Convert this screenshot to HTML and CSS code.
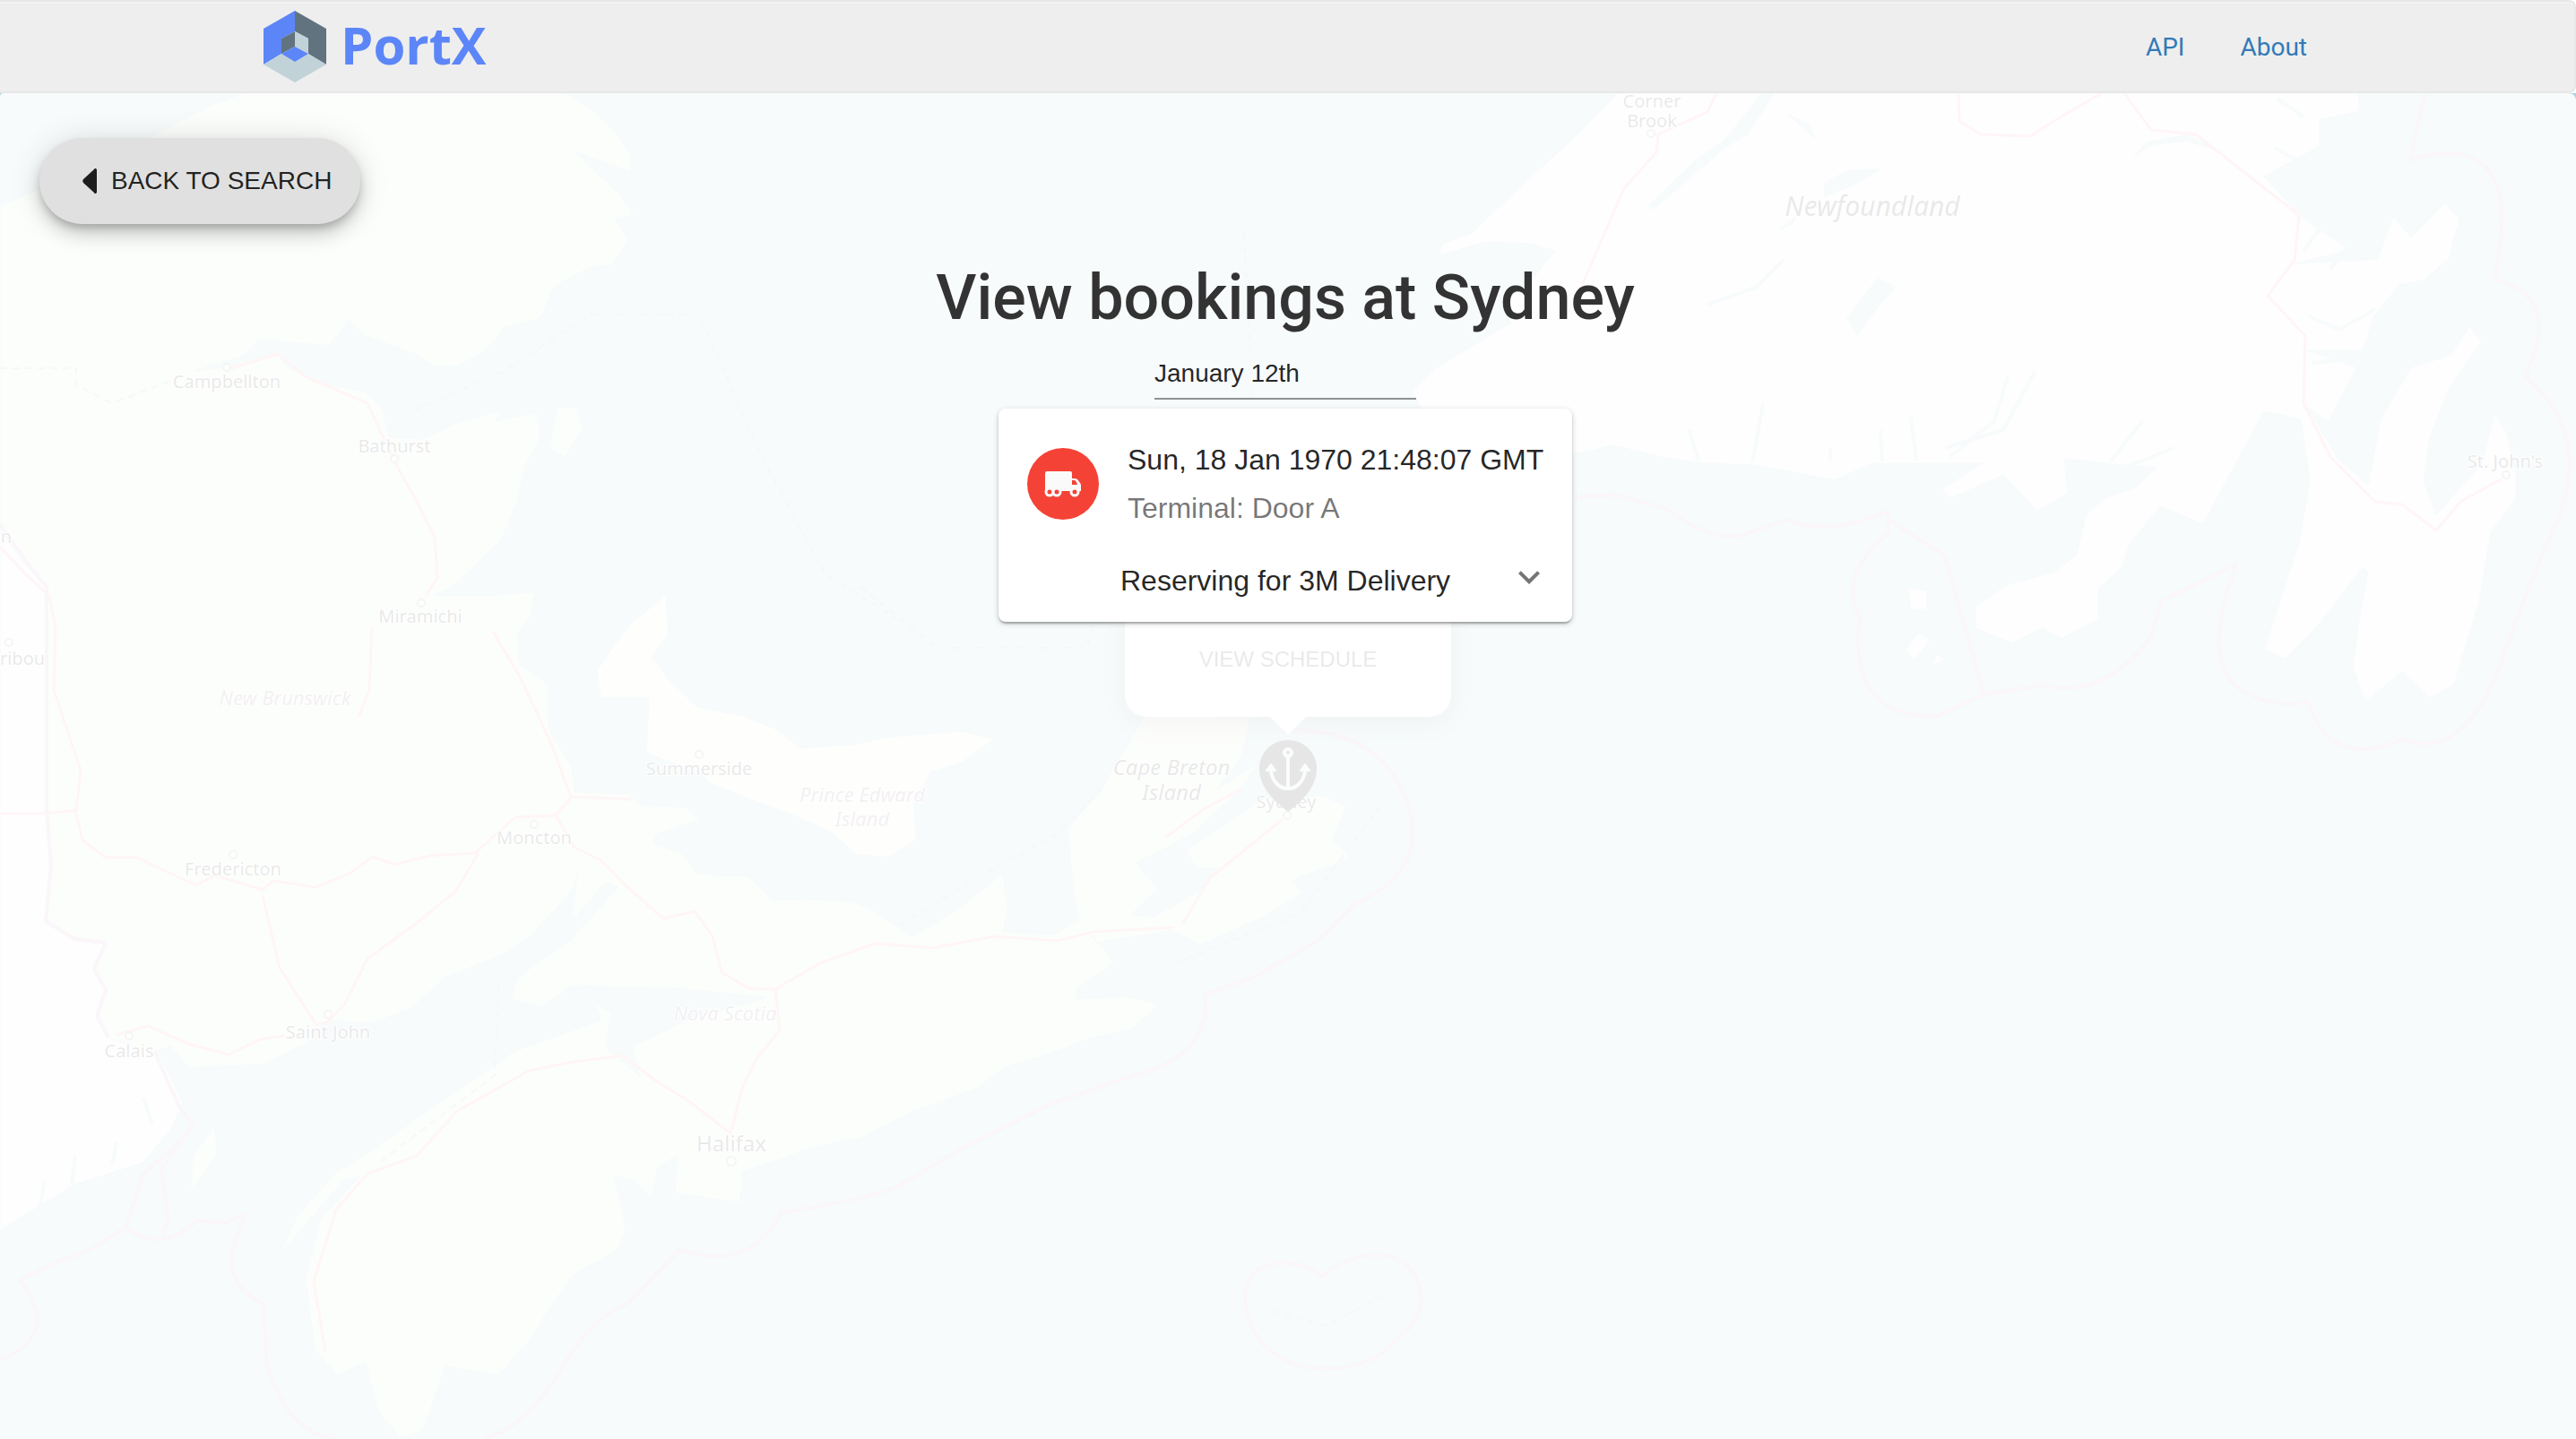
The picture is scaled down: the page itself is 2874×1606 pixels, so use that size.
FILE: index.html
```
<!DOCTYPE html>
<html lang="en">
<head>
    <meta charset="UTF-8">
    <meta name="viewport" content="width=device-width, initial-scale=1.0">
    <title>PortX</title>
    <link rel="stylesheet" href="styles.css">
</head>
<body>
    <header class="navbar">
        <a class="brand" href="#">
            <svg class="brand-logo" viewBox="0 0 70 80" aria-hidden="true">
                <path fill="#5c86f8" d="M35 0 0 20v40l20-12V31l15-8z"/>
                <path fill="#627380" d="M35 0l35 20v40L50 48V31l-15-8z"/>
                <path fill="#c1d3d9" d="M0 60l20-12 15 9 15-9 20 12-35 20z"/>
                <path fill="#627380" d="M20 31l15-8v17L20 48z"/>
                <path fill="#c1d3d9" d="M50 31l-15-8v17l15 8z"/>
                <path fill="#5c86f8" d="M20 48l15-8 15 8-15 9z"/>
            </svg>
            <span>PortX</span>
        </a>
        <nav class="nav-links">
            <a href="#">API</a>
            <a href="#">About</a>
        </nav>
    </header>

    <main class="content">
        <div class="map">
            <svg class="map-tiles" viewBox="0 104 2874 1502" preserveAspectRatio="xMidYMid slice" aria-hidden="true">
                <!-- land -->
                <path class="land forest" d="M272 104 237 117 207 132 165 155 90 190 27 218 0 230V1373L83 1322 159 1298 191 1260 204 1231 172 1173 191 1168 210 1192 293 1188 344 1163 364 1139 415 1142 459 1125 497 1091 561 1065 593 1043 638 995 644 975 638 1028 676 985 689 990 638 1048 577 1091 571 1115 603 1125 638 1101 753 1103 855 1113 765 1139 705 1168 714 1202 676 1168 682 1130 663 1120 670 1139 574 1173 497 1226 421 1279 376 1308 332 1356 312 1400 383 1318 402 1313 357 1361 341 1429 351 1506 376 1535 408 1520 421 1573 446 1605 472 1597 497 1525 555 1535 587 1501 612 1462 638 1424 689 1395 698 1371 686 1313 708 1318 727 1337 733 1303 756 1289 753 1332 826 1342 829 1308 912 1279 961 1270 1017 1241 1089 1215 1119 1192 1165 1178 1211 1161 1262 1149 1292 1121 1257 1112 1201 1115 1201 1103 1244 1075 1219 1046 1206 1026 1175 1043 1119 1040 1124 1017 1119 974 1073 1012 1017 1046 976 1017 951 1006 900 1003 861 1004 835 978 778 975 759 951 730 942 730 932 781 915 765 901 714 898 701 886 641 884 638 855 612 814 612 763 580 743 577 707 593 687 596 661 548 664 485 664 504 656 536 625 561 600 577 559 587 518 603 488 600 460 552 470 561 457 510 472 472 490 434 488 427 457 408 437 364 429 319 409 309 393 255 409 217 414 274 396 287 381 312 381 367 386 389 358 408 375 466 396 485 409 510 409 542 391 564 365 603 355 619 319 657 299 682 296 702 268 686 245 709 240 689 215 670 197 641 169 676 182 704 192 703 171 689 151 663 125 631 104z"/>
                <path class="land" d="M0 590 20 620 50 655 52 903 57 966 51 1028 83 1048 118 1052 105 1081 118 1105 108 1134 121 1158 178 1178 204 1231 191 1260 159 1298 83 1322 0 1373z"/>
                <path class="land coast" d="M743 664 746 707 727 733 746 758 778 789 829 799 867 814 893 835 957 830 992 822 1073 816 1109 825 1073 851 1038 862 1020 897 1022 937 992 957 956 954 925 927 880 908 829 889 791 874 784 865 721 840 724 779 670 779 666 748 702 697z"/>
                <path class="land forest" d="M1277 799 1395 800 1385 845 1359 880 1405 851 1380 885 1330 930 1308 943 1267 963 1293 992 1262 1020 1288 1023 1339 994 1360 970 1334 969 1323 948 1375 915 1410 891 1476 888 1502 900 1487 937 1507 957 1441 983 1453 997 1410 1023 1339 1055 1308 1038 1226 1052 1203 1029 1196 977 1191 925 1226 885z"/>
                <path class="land forest" d="M644 455 650 480 630 510 612 500 622 455zM240 1255 242 1290 212 1330 216 1290z"/>
                <path class="land" d="M1805 104 1760 150 1700 205 1642 260 1609 272 1606 285 1658 270 1708 272 1735 280 1708 313 1675 340 1686 360 1603 410 1576 437 1592 470 1757 507 1800 497 1862 512 1896 517 1958 519 2047 536 2088 517 2211 517 2166 546 2177 556 2235 530 2273 570 2307 551 2303 512 2368 519 2406 522 2382 544 2348 556 2327 575 2317 619 2293 638 2238 653 2204 677 2204 701 2245 718 2279 701 2300 713 2341 691 2341 657 2368 633 2375 609 2410 565 2458 585 2492 522 2526 459 2567 468 2577 536 2564 609 2553 643 2526 725 2550 735 2588 696 2636 633 2642 638 2632 691 2625 745 2639 783 2680 750 2711 779 2738 764 2766 672 2779 594 2807 556 2807 527 2797 483 2783 461 2769 517 2718 575 2704 536 2711 488 2732 434 2769 381 2755 364 2735 396 2690 410 2656 468 2642 541 2608 512 2574 454 2598 471 2629 410 2574 391 2636 391 2649 352 2677 318 2704 313 2732 289 2744 245 2728 226 2690 265 2670 241 2653 289 2560 294 2622 279 2567 241 2526 197 2588 163 2588 134 2632 124 2632 104z"/>
                <path class="land" d="M2128 655 2150 660 2150 680 2132 680zM2140 706 2154 714 2136 736 2125 726zM2160 730 2170 735 2156 743z"/>
                <!-- lakes and inlets -->
                <path class="water" d="M2060 355 2095 310 2115 320 2090 350 2072 375zM2035 205 2060 190 2100 188 2070 206 2035 220zM1980 104 1950 150 1925 165 1845 234 1838 230 1890 180 1925 155 1965 104zM1992 126 2018 138 2026 156zM2378 178 2395 158 2440 150 2485 172 2440 158 2400 162zM2000 250 1980 260 2005 240z"/>
                <path class="inlet" d="M1967 450 1955 517M2132 465 2138 515M2240 420 2225 470 2175 510M2270 415 2235 480 2170 500M2390 470 2355 515M2425 500 2370 522M2042 515V500M1885 480 1895 515M2100 515 2098 480M2540 110 2570 130M1905 340 1960 320 1990 290M2626 400 2580 405M2574 352 2610 368 2650 345M2538 165 2600 200 2560 225M2575 175 2625 160M2600 240 2570 280M2640 250 2600 300M80 1322 84 1290M45 1345 50 1318M125 1300 130 1275M170 1255 160 1225"/>
                <!-- roads -->
                <path class="road" d="M0 908H52L84 904 92 938 118 957 153 957 218 988 240 977 293 993 305 983 352 990 390 975 416 956 440 965 480 955 530 952 575 912 620 910 638 889 705 892M0 610 28 640 55 665 62 700 60 770 90 860 85 905M534 952 508 995 465 1030 410 1070 385 1120 366 1140 353 1144 312 1080 293 1000M130 1155 165 1145 210 1165 255 1177 290 1160 317 1156M620 910 640 945 670 960 700 990 740 1025 775 1017 795 1045 805 1085 835 1103 865 1104 915 1075 976 1053 1040 1058 1110 1045 1180 1050 1220 1040 1310 1035M865 1104 870 1150 845 1180 828 1215 815 1265 770 1230 730 1205 695 1178 640 1185 590 1195 510 1240 465 1290 410 1310 375 1350 350 1430 363 1508M255 412 310 395 340 420 410 450 440 515 465 560 485 600 488 645 475 665M415 700 412 770 400 800M550 705 580 755 615 830 637 890M1300 935 1340 905 1385 880M1320 1030 1350 980 1430 915"/>
                <path class="road" d="M1915 104 1905 125 1850 150 1848 170 1812 210 1760 330M2185 104 2186 135 2210 150 2265 152 2300 130 2345 104M2370 104 2400 145 2450 150 2520 205 2565 240 2560 290 2530 330 2572 375 2570 450 2600 510 2650 560 2680 563 2718 592 2745 560 2790 535"/>
                <!-- borders -->
                <path class="border" d="M0 585 28 625 52 655V903L57 966 51 1028 83 1048 118 1052 105 1081 118 1105 108 1134 121 1158M172 1173 200 1235 215 1255 180 1305 187 1360 180 1384M205 1270 160 1310 140 1370 100 1395 60 1410 22 1428Q70 1490 0 1518M140 1370Q180 1400 220 1362L250 1365 275 1355Q235 1430 295 1455L297 1520Q320 1600 375 1606M540 1606Q590 1590 625 1530T700 1455L758 1395Q840 1420 872 1353 960 1340 1000 1325L1073 1282 1170 1233 1265 1200Q1350 1180 1345 1110L1400 1090 1470 1050 1510 1010Q1600 970 1568 890T1430 815"/>
                <path class="border" d="M1757 555 1800 552 1860 568Q1915 610 1950 595L1995 580Q2040 600 2107 570V595Q2050 640 2075 690 2060 800 2160 800L2213 775 2170 620 2107 580M2213 775 2280 765Q2350 780 2400 710L2412 670 2495 630Q2450 750 2510 775 2540 790 2575 783 2600 860 2680 825 2750 850 2790 740T2845 600Q2900 490 2817 420 2860 330 2783 312 2820 140 2689 178L2705 104"/>
                <path class="border" d="M1390 1460C1380 1400 1450 1400 1475 1425 1500 1400 1570 1380 1585 1440 1590 1480 1560 1490 1540 1512 1480 1545 1400 1525 1390 1460z"/>
                <path class="limit" d="M0 411H85V430L125 450 190 425M463 457 560 415 660 351H780L850 510 920 640 1000 690M960 655 1045 723H1213L1220 690M1388 260 1400 500M1230 880 1180 930 1090 980 1000 1035M556 1100 552 1200 420 1300M1310 1075 1450 1020 1540 900M1420 1463 1480 1480 1540 1447"/>
                <g class="town">
                    <circle cx="253" cy="410" r="4"/>
                    <circle cx="440" cy="512" r="4"/>
                    <circle cx="470" cy="673" r="4"/>
                    <circle cx="780" cy="842" r="4"/>
                    <circle cx="10" cy="717" r="4"/>
                    <circle cx="596" cy="920" r="4"/>
                    <circle cx="260" cy="954" r="4"/>
                    <circle cx="366" cy="1132" r="4"/>
                    <circle cx="144" cy="1156" r="4"/>
                    <circle cx="816" cy="1296" r="5"/>
                    <circle cx="1436" cy="910" r="4"/>
                    <circle cx="1842" cy="149" r="4"/>
                    <circle cx="2796" cy="530" r="4"/>
                </g>
                <g class="label">
                    <text x="253" y="433">Campbellton</text>
                    <text x="440" y="505">Bathurst</text>
                    <text x="469" y="695">Miramichi</text>
                    <text x="780" y="865">Summerside</text>
                    <text x="7" y="606">n</text>
                    <text x="25" y="742">ribou</text>
                    <text x="596" y="942">Moncton</text>
                    <text x="260" y="977">Fredericton</text>
                    <text x="366" y="1159">Saint John</text>
                    <text x="144" y="1180">Calais</text>
                    <text x="1435" y="902">Sydney</text>
                    <text x="1843" y="120">Corner</text>
                    <text x="1843" y="142">Brook</text>
                    <text x="2795" y="522">St. John's</text>
                    <text class="city" x="816" y="1285">Halifax</text>
                </g>
                <g class="label region">
                    <text x="318" y="787">New Brunswick</text>
                    <text x="962" y="895">Prince Edward</text>
                    <text x="962" y="922">Island</text>
                    <text x="809" y="1139">Nova Scotia</text>
                </g>
                <g class="label island">
                    <text x="1307" y="865">Cape Breton</text>
                    <text x="1307" y="893">Island</text>
                    <text class="big" x="2089" y="241">Newfoundland</text>
                </g>
            </svg>
            <div class="marker">
                <div class="popup">
                    <button type="button">View schedule</button>
                </div>
                <svg class="pin" viewBox="0 0 64 80" aria-hidden="true">
                    <path d="M32 0C14 0 0 14 0 32c0 20 16 36 32 48 16-12 32-28 32-48C64 14 50 0 32 0z"/>
                    <g fill="none" stroke="#d0e6ec" stroke-width="4">
                        <circle cx="32" cy="14" r="4"/>
                        <path d="M32 18v36M13 35c2 12 10 19 19 19s17-7 19-19"/>
                    </g>
                    <path class="fluke" d="M13 27l5 7H8zM51 27l5 7H46z"/>
                </svg>
            </div>
        </div>

        <div class="bookings">
            <button class="back-button" type="button">
                <svg viewBox="0 0 16 28" aria-hidden="true"><path d="M16 2v24c0 2-2 3-3 1L1 16c-1-1-1-3 0-4L13 1c1-2 3-1 3 1z"/></svg>
                Back to search
            </button>

            <h1>View bookings at Sydney</h1>
            <input class="date-input" type="text" value="January 12th" aria-label="Booking date">

            <section class="card">
                <div class="card-header">
                    <div class="avatar">
                        <svg viewBox="0 0 40 28" aria-hidden="true">
                            <path d="M2 0h26q2 0 2 2v6h3q2 0 3 1l3 4q1 1 1 3v6H0V2q0-2 2-2z"/>
                            <g class="wheels">
                                <circle cx="5" cy="23" r="4"/>
                                <circle cx="13" cy="23" r="4"/>
                                <circle cx="33" cy="23" r="4"/>
                            </g>
                            <path class="window" d="M30 10h3l2 2 1 3h-6z"/>
                        </svg>
                    </div>
                    <div>
                        <div class="card-title">Sun, 18 Jan 1970 21:48:07 GMT</div>
                        <div class="card-subtitle">Terminal: Door A</div>
                    </div>
                </div>
                <div class="card-actions">
                    <span>Reserving for 3M Delivery</span>
                    <button class="expand" type="button" aria-label="Show more">
                        <svg viewBox="0 0 24 24"><path d="M16.59 8.59L12 13.17 7.41 8.59 6 10l6 6 6-6z"/></svg>
                    </button>
                </div>
            </section>
        </div>
    </main>
</body>
</html>
```
FILE: styles.css
```
:root {
    --blue: #337ab7;
    --brand: #5c86f8;
    --red: #f44336;
    --text: rgba(0, 0, 0, 0.87);
    --text-secondary: rgba(0, 0, 0, 0.54);
    --sea: #aad3df;
}

* {
    box-sizing: border-box;
}

body {
    margin: 0;
    min-height: 100vh;
    display: flex;
    flex-direction: column;
    font-family: Roboto, sans-serif;
    font-size: 28px;
    color: #333;
    background: #fff;
}

button,
input {
    font-family: "Liberation Sans", Arial, sans-serif;
    color: var(--text);
}

/* top bar */
.navbar {
    display: flex;
    align-items: center;
    justify-content: space-between;
    height: 104px;
    padding: 0 298px 0 294px;
    background: #eee;
    border: 2px solid #e7e7e7;
    border-left: 0;
    border-radius: 0 8px 8px 0;
    box-shadow: inset 0 2px 0 rgba(255, 255, 255, 0.3);
}

.brand {
    display: flex;
    align-items: flex-start;
    gap: 16px;
    font-family: "Open Sans", sans-serif;
    font-size: 58px;
    font-weight: 700;
    line-height: 76px;
    color: var(--brand);
    text-decoration: none;
}

.brand-logo {
    width: 70px;
    height: 80px;
}

.nav-links {
    display: flex;
    gap: 62px;
}

.nav-links a {
    color: var(--blue);
    text-decoration: none;
}

/* map */
.content {
    position: relative;
    flex: 1;
    display: flex;
}

.map {
    position: absolute;
    inset: 0;
    overflow: hidden;
    background: var(--sea);
}

.map-tiles {
    display: block;
    width: 100%;
    height: 100%;
}

.land {
    fill: #f2f1ee;
    stroke: #9fcbd8;
    stroke-width: 1;
    stroke-linejoin: round;
}

.land.forest {
    fill: #e0f0d6;
}

.land.coast {
    fill: #eff0dc;
}

.water {
    fill: var(--sea);
}

.inlet,
.road,
.border,
.limit {
    fill: none;
    stroke-linejoin: round;
}

.inlet {
    stroke: var(--sea);
    stroke-width: 4;
}

.road {
    stroke: #ff9aa8;
    stroke-width: 3;
}

.border {
    stroke: #c8a0c8;
    stroke-width: 4;
}

.limit {
    stroke: #b0a8d0;
    stroke-width: 2;
    stroke-dasharray: 8 6;
}

.town {
    fill: #fff;
    stroke: #999;
    stroke-width: 2;
}

.label {
    font-family: "Noto Sans", sans-serif;
    font-size: 20px;
    text-anchor: middle;
    fill: #222;
    stroke: #fff;
    stroke-width: 2;
    paint-order: stroke;
}

.label .city {
    font-size: 24px;
}

.label.region {
    font-size: 22px;
    font-style: italic;
    fill: #806880;
}

.label.island {
    font-size: 24px;
    font-style: italic;
    fill: #222;
}

.label .big {
    font-size: 30px;
}

.marker {
    position: absolute;
    left: 50%;
    bottom: calc(50% - 51px);
    transform: translateX(-50%);
    display: flex;
    flex-direction: column;
    align-items: center;
    gap: 26px;
}

.popup {
    position: relative;
    width: 364px;
    padding: 32px;
    background: #fff;
    border-radius: 24px;
    box-shadow: 0 6px 28px rgba(0, 0, 0, 0.4);
}

.popup::after {
    content: "";
    position: absolute;
    top: 100%;
    left: 50%;
    margin-left: -20px;
    border: 20px solid transparent;
    border-top-color: #fff;
    border-bottom: 0;
}

.popup button {
    display: block;
    width: 100%;
    padding: 20px 0;
    border: 0;
    background: none;
    font-size: 24px;
    line-height: 24px;
    text-transform: uppercase;
}

.pin {
    width: 64px;
    height: 80px;
}

.pin .fluke {
    fill: #d0e6ec;
    stroke: #d0e6ec;
    stroke-width: 2;
    stroke-linejoin: round;
}

/* overlay on top of the map */
.bookings {
    position: relative;
    flex: 1;
    display: flex;
    flex-direction: column;
    align-items: center;
    padding: 50px 12px 50px 6px;
    background: rgba(255, 255, 255, 0.9);
    border-radius: 4px 8px 0 0;
}

.back-button {
    align-self: flex-start;
    display: flex;
    align-items: center;
    gap: 16px;
    height: 96px;
    margin-left: 38px;
    padding: 0 32px 0 48px;
    border: 0;
    border-radius: 48px;
    background: #e0e0e0;
    font-size: 28px;
    text-transform: uppercase;
    box-shadow: 0 6px 10px -2px rgba(0, 0, 0, 0.2),
        0 12px 20px 0 rgba(0, 0, 0, 0.14),
        0 2px 36px 0 rgba(0, 0, 0, 0.12);
}

.back-button svg {
    width: 16px;
    height: 28px;
    fill: currentColor;
}

h1 {
    margin: 42px 0 18px;
    font-size: 70px;
    font-weight: 500;
    line-height: 80px;
}

.date-input {
    width: 292px;
    height: 56px;
    padding: 6px 0;
    border: 0;
    border-bottom: 2px solid rgba(0, 0, 0, 0.42);
    border-radius: 0;
    background: none;
    font-size: 28px;
    outline: 0;
}

.card {
    width: 640px;
    margin-top: 10px;
    border-radius: 8px;
    background: #fff;
    color: var(--text);
    font-family: "Liberation Sans", Arial, sans-serif;
    font-size: 32px;
    box-shadow: 0 2px 6px 0 rgba(0, 0, 0, 0.2),
        0 2px 2px 0 rgba(0, 0, 0, 0.14),
        0 4px 2px -2px rgba(0, 0, 0, 0.12);
}

.card-header {
    display: flex;
    align-items: center;
    gap: 32px;
    padding: 30px 24px 22px 32px;
}

.avatar {
    display: flex;
    align-items: center;
    justify-content: center;
    flex: none;
    width: 80px;
    height: 80px;
    border-radius: 50%;
    background: var(--red);
}

.avatar svg {
    width: 40px;
    height: 28px;
    overflow: visible;
    fill: #fafafa;
}

.avatar .wheels {
    fill: var(--red);
    stroke: #fafafa;
    stroke-width: 3;
}

.avatar .window {
    fill: var(--red);
}

.card-title,
.card-subtitle {
    line-height: 54px;
    white-space: nowrap;
}

.card-subtitle {
    color: var(--text-secondary);
}

.card-actions {
    display: flex;
    justify-content: space-between;
    padding: 0 24px 14px 136px;
    line-height: 64px;
}

.expand {
    display: flex;
    align-items: center;
    height: 56px;
    padding: 0;
    border: 0;
    background: none;
}

.expand svg {
    width: 48px;
    height: 48px;
    fill: var(--text-secondary);
}
```
